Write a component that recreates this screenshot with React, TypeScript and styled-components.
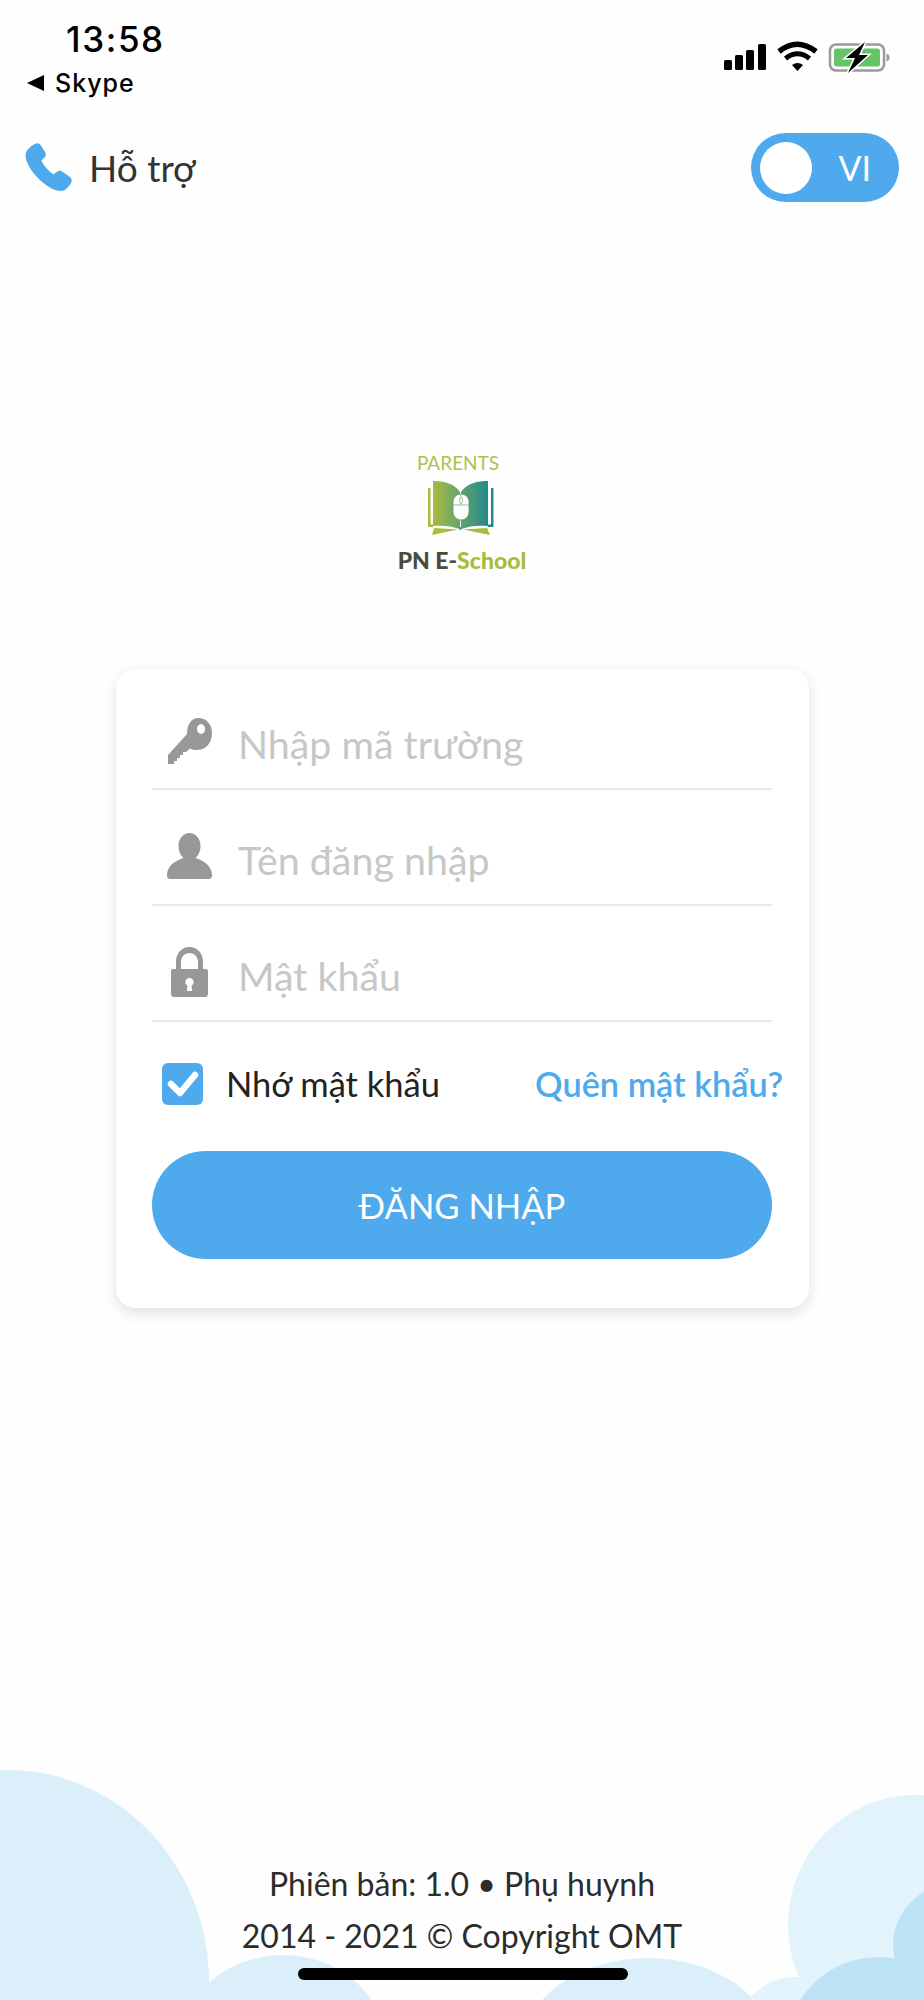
import React from "react";
import styled, { createGlobalStyle } from "styled-components";

const Global = createGlobalStyle`
  html, body { margin: 0; padding: 0; background: #fefefe; }
  * { box-sizing: border-box; }
`;

const Page = styled.div`
  position: relative;
  width: 924px;
  height: 2000px;
  overflow: hidden;
  background: #fefefe;
  display: flex;
  flex-direction: column;
  font-family: Lato, "Noto Sans", sans-serif;
`;

const Clouds = styled.svg`
  position: absolute;
  left: 0;
  bottom: 0;
  width: 924px;
  height: 260px;
`;

const StatusBar = styled.div`
  position: relative;
  height: 133px;
  padding: 20px 32px 0 27px;
  display: flex;
  justify-content: space-between;
  align-items: flex-start;
  font-family: Inter, "Liberation Sans", sans-serif;
  color: #000;
`;

const StatusLeft = styled.div`
  display: flex;
  flex-direction: column;
`;

const Time = styled.div`
  font-size: 35px;
  line-height: 38px;
  font-weight: 500;
  letter-spacing: 1.600px;
  padding-left: 39px;
`;

const BackLink = styled.div`
  display: flex;
  align-items: center;
  gap: 11px;
  height: 30px;
  margin-top: 10px;
  font-size: 25px;
  font-weight: 500;
  letter-spacing: 1px;
`;

const StatusIcons = styled.svg`
  width: 170px;
  height: 34px;
  margin-top: 24px;
  overflow: visible;
`;

const TopBar = styled.div`
  height: 69px;
  padding: 0 25px 0 25px;
  display: flex;
  justify-content: space-between;
  align-items: center;
`;

const Support = styled.div`
  display: flex;
  align-items: center;
  gap: 13px;
  font-size: 37px;
  color: #333;
`;

const LangToggle = styled.div`
  width: 148px;
  height: 69px;
  border-radius: 35px;
  background: #4eaaec;
  padding: 0 28px 0 9px;
  display: flex;
  justify-content: space-between;
  align-items: center;
  color: #fff;
  font-size: 34px;
`;

const Knob = styled.div`
  width: 52px;
  height: 52px;
  border-radius: 50%;
  background: #fff;
`;

const Logo = styled.div`
  display: flex;
  flex-direction: column;
  align-items: center;
  margin-top: 250px;
  height: 217px;
`;

const LogoTop = styled.div`
  font-size: 19px;
  line-height: 22px;
  font-weight: 400;
  color: #b1c14e;
  margin-right: 8px;
`;

const LogoBook = styled.svg`
  width: 67px;
  height: 58px;
  margin: 6px 3px 0 0;
`;

const LogoName = styled.div`
  font-size: 23px;
  line-height: 26px;
  font-weight: 900;
  color: #4b4b3c;
  margin: 9px 0 0 0;
  span { color: #a9bb3c; }
`;

const Card = styled.div`
  width: 693px;
  height: 639px;
  margin-left: 116px;
  padding: 5px 37px 0 36px;
  background: #fff;
  border-radius: 20px;
  box-shadow: 0 5px 14px rgba(0, 0, 0, 0.12);
`;

const Field = styled.div`
  height: 116px;
  padding: 17px 0 0 15px;
  display: flex;
  align-items: center;
  border-bottom: 2px solid #e9e9e9;
`;

const FieldIcon = styled.svg`
  width: 45px;
  height: 50px;
  flex: none;
  fill: #989898;
`;

const Placeholder = styled.div`
  margin-left: 26px;
  padding-top: 7px;
  font-size: 39.400px;
  color: #c7c7c7;
`;

const OptionsRow = styled.div`
  height: 129px;
  margin: 0 -11px 0 10px;
  padding-bottom: 6px;
  display: flex;
  align-items: center;
`;

const CheckBox = styled.div`
  width: 41px;
  height: 42px;
  border-radius: 6px;
  background: #4eaaec;
  display: flex;
  align-items: center;
  justify-content: center;
`;

const Remember = styled.div`
  margin-left: 23px;
  font-size: 34.500px;
  color: #222;
`;

const Forgot = styled.div`
  margin-left: auto;
  font-size: 34.300px;
  font-weight: 600;
  color: #4eaaec;
`;

const LoginButton = styled.div`
  height: 108px;
  border-radius: 54px;
  background: #4eaaec;
  color: #fff;
  font-size: 34.600px;
  display: flex;
  align-items: center;
  justify-content: center;
`;

const Footer = styled.div`
  position: relative;
  margin-top: auto;
  padding-bottom: 38px;
  text-align: center;
  font-size: 32px;
  line-height: 52px;
  color: #2c2c2c;
`;

const HomeIndicator = styled.div`
  position: absolute;
  left: 298px;
  bottom: 20px;
  width: 330px;
  height: 12px;
  border-radius: 6px;
  background: #000;
`;

export default function App() {
  return (
    <Page>
      <Global />
      <Clouds viewBox="0 1740 924 260">
        <ellipse cx="8" cy="1982" rx="201" ry="212" fill="#dbeffb" />
        <ellipse cx="283" cy="2040" rx="100" ry="85" fill="#dbeffb" />
        <ellipse cx="648" cy="2048" rx="125" ry="90" fill="#dbeffb" />
        <ellipse cx="915" cy="1925" rx="127" ry="130" fill="#e3f3fb" />
        <ellipse cx="795" cy="2040" rx="60" ry="63" fill="#e3f3fb" />
        <ellipse cx="965" cy="1945" rx="72" ry="65" fill="#bde2f6" />
        <ellipse cx="878" cy="2050" rx="92" ry="93" fill="#bde2f6" />
      </Clouds>

      <StatusBar>
        <StatusLeft>
          <Time>13:58</Time>
          <BackLink>
            <svg width="17" height="16" viewBox="0 0 17 16">
              <path d="M0 8 17 0v16z" fill="#000" />
            </svg>
            Skype
          </BackLink>
        </StatusLeft>
        <StatusIcons viewBox="0 0 170 34">
          <rect x="2" y="16" width="8" height="10" rx="1.5" fill="#000" />
          <rect x="13" y="11" width="8" height="15" rx="1.5" fill="#000" />
          <rect x="24" y="6" width="8" height="20" rx="1.5" fill="#000" />
          <rect x="36" y="0" width="8" height="26" rx="1.5" fill="#000" />
          <path d="M57 7.5Q75 -7 94 7.5" fill="none" stroke="#000" strokeWidth="5.5" />
          <path d="M63.5 14.5Q75.5 5 87.500 14.5" fill="none" stroke="#000" strokeWidth="5" />
          <path d="M70 21Q75.5 17 81 21L75.5 27z" fill="#000" />
          <rect x="108" y="0.5" width="54" height="26" rx="6" fill="#fff" stroke="#9a9a9a" strokeWidth="2.5" />
          <rect x="112" y="4.500" width="46" height="18" rx="2.5" fill="#64c466" />
          <path d="M164.5 9.500q3 1 3 4t-3 4z" fill="#9a9a9a" />
          <path
            d="M143 -2 124 14h9l-7 15 20-18h-9l6-13z"
            fill="#000"
            stroke="#fff"
            strokeWidth="3"
            paintOrder="stroke"
          />
        </StatusIcons>
      </StatusBar>

      <TopBar>
        <Support>
          <svg width="51" height="50" viewBox="0 0 51 50">
            <path
              d="M10 .8C12 -.4 14.5.2 15.8 2.2l4.4 7c1 1.700.8 3.700-.5 5l-3.300 3.300c1.800 4.300 6.500 10.300 12.200 13.800l3.400-2.600c1.500-1.100 3.400-1.200 5-.2l7.600 5.200c2 1.400 2.700 4 1.500 6-2.200 3.800-5.600 8.300-10 8.300C22 48 1 26 .5 12.500.3 7.800 6 3 10 .8z"
              fill="#4eaaec"
            />
          </svg>
          Hỗ trợ
        </Support>
        <LangToggle>
          <Knob />
          VI
        </LangToggle>
      </TopBar>

      <Logo>
        <LogoTop>PARENTS</LogoTop>
        <LogoBook viewBox="47 41 67 58">
          <defs>
            <linearGradient id="bookGrad" gradientUnits="userSpaceOnUse" x1="53" x2="108" y1="0" y2="0">
              <stop offset="0" stopColor="#a9bb3e" />
              <stop offset="0.5" stopColor="#62a36c" />
              <stop offset="1" stopColor="#24898c" />
            </linearGradient>
          </defs>
          <path d="M48 49h2.500v36.500H53V88h-5z" fill="#a9bb3e" />
          <path d="M113.500 49H111v36.500h-3V88h5.500z" fill="#24898c" />
          <path d="M54 89 78 90.500 52 96z" fill="#a9bb3e" />
          <path d="M107 89 83 90.500 110 96z" fill="#a9bb3e" />
          <path d="M53 42C63 42 74 44 80 53V90C72 87 62 86 53 87z" fill="url(#bookGrad)" />
          <path d="M108 42C98 42 87 44 81 53V90C89 87 99 86 108 87z" fill="url(#bookGrad)" />
          <path d="M78 88h5l-2.500 3.500z" fill="#4f9b78" />
          <rect x="73" y="55" width="16" height="26" rx="8" fill="#fff" stroke="#5f9f70" strokeWidth="0.8" />
          <path d="M73 66h16M81 55v4M81 64v2" stroke="#6fa566" strokeWidth="0.7" />
          <rect x="79.500" y="59" width="3" height="5" rx="1.500" fill="#fff" stroke="#6fa566" strokeWidth="0.7" />
        </LogoBook>
        <LogoName>
          PN E-<span>School</span>
        </LogoName>
      </Logo>

      <Card>
        <Field>
          <FieldIcon viewBox="0 0 45 50">
            <path
              fillRule="evenodd"
              d="M31 3C39 3 45 9 45 18c0 10-6 17-15 17-3 0-5-.5-7-1.500l-4 3.500h-3v3h-3v3h-3v3h-3v3H1v-9l19-21C20 10 24 3 31 3zm3 6a4 5 0 1 0 .01 0z"
            />
          </FieldIcon>
          <Placeholder>Nhập mã trường</Placeholder>
        </Field>
        <Field>
          <FieldIcon viewBox="0 0 45 50">
            <path d="M22.500 2C29 2 33.500 8 33.500 15c0 5-2 9.500-5 12 8 2.500 16.500 8 16.500 17 0 3-1 4-4 4H4c-3 0-4-1-4-4 0-9 8.500-14.500 16.500-17-3-2.500-5-7-5-12C11.500 8 16 2 22.500 2z" />
          </FieldIcon>
          <Placeholder>Tên đăng nhập</Placeholder>
        </Field>
        <Field>
          <FieldIcon viewBox="0 0 45 50">
            <path
              fillRule="evenodd"
              d="M22.500 0C31 0 36 7 36 15v7h3c1.500 0 2 1 2 2.500V47c0 1.500-1 3-2.500 3h-32C5 50 4 48.500 4 47V24.500C4 23 4.500 22 6 22h3v-7C9 7 14 0 22.500 0zM14 22h17v-7c0-5-3.500-9-8.500-9S14 10 14 15zm8.500 9a4 4 0 0 0-2 7.500l-.7 5.500h5.400l-.7-5.500a4 4 0 0 0-2-7.500z"
            />
          </FieldIcon>
          <Placeholder>Mật khẩu</Placeholder>
        </Field>
        <OptionsRow>
          <CheckBox>
            <svg width="32" height="28" viewBox="0 0 32 28">
              <path d="M4 14l9 9L28 5" fill="none" stroke="#fff" strokeWidth="6.500" strokeLinecap="round" strokeLinejoin="round" />
            </svg>
          </CheckBox>
          <Remember>Nhớ mật khẩu</Remember>
          <Forgot>Quên mật khẩu?</Forgot>
        </OptionsRow>
        <LoginButton>ĐĂNG NHẬP</LoginButton>
      </Card>

      <Footer>
        <div>Phiên bản: 1.0 • Phụ huynh</div>
        <div>2014 - 2021 © Copyright OMT</div>
      </Footer>
      <HomeIndicator />
    </Page>
  );
}
